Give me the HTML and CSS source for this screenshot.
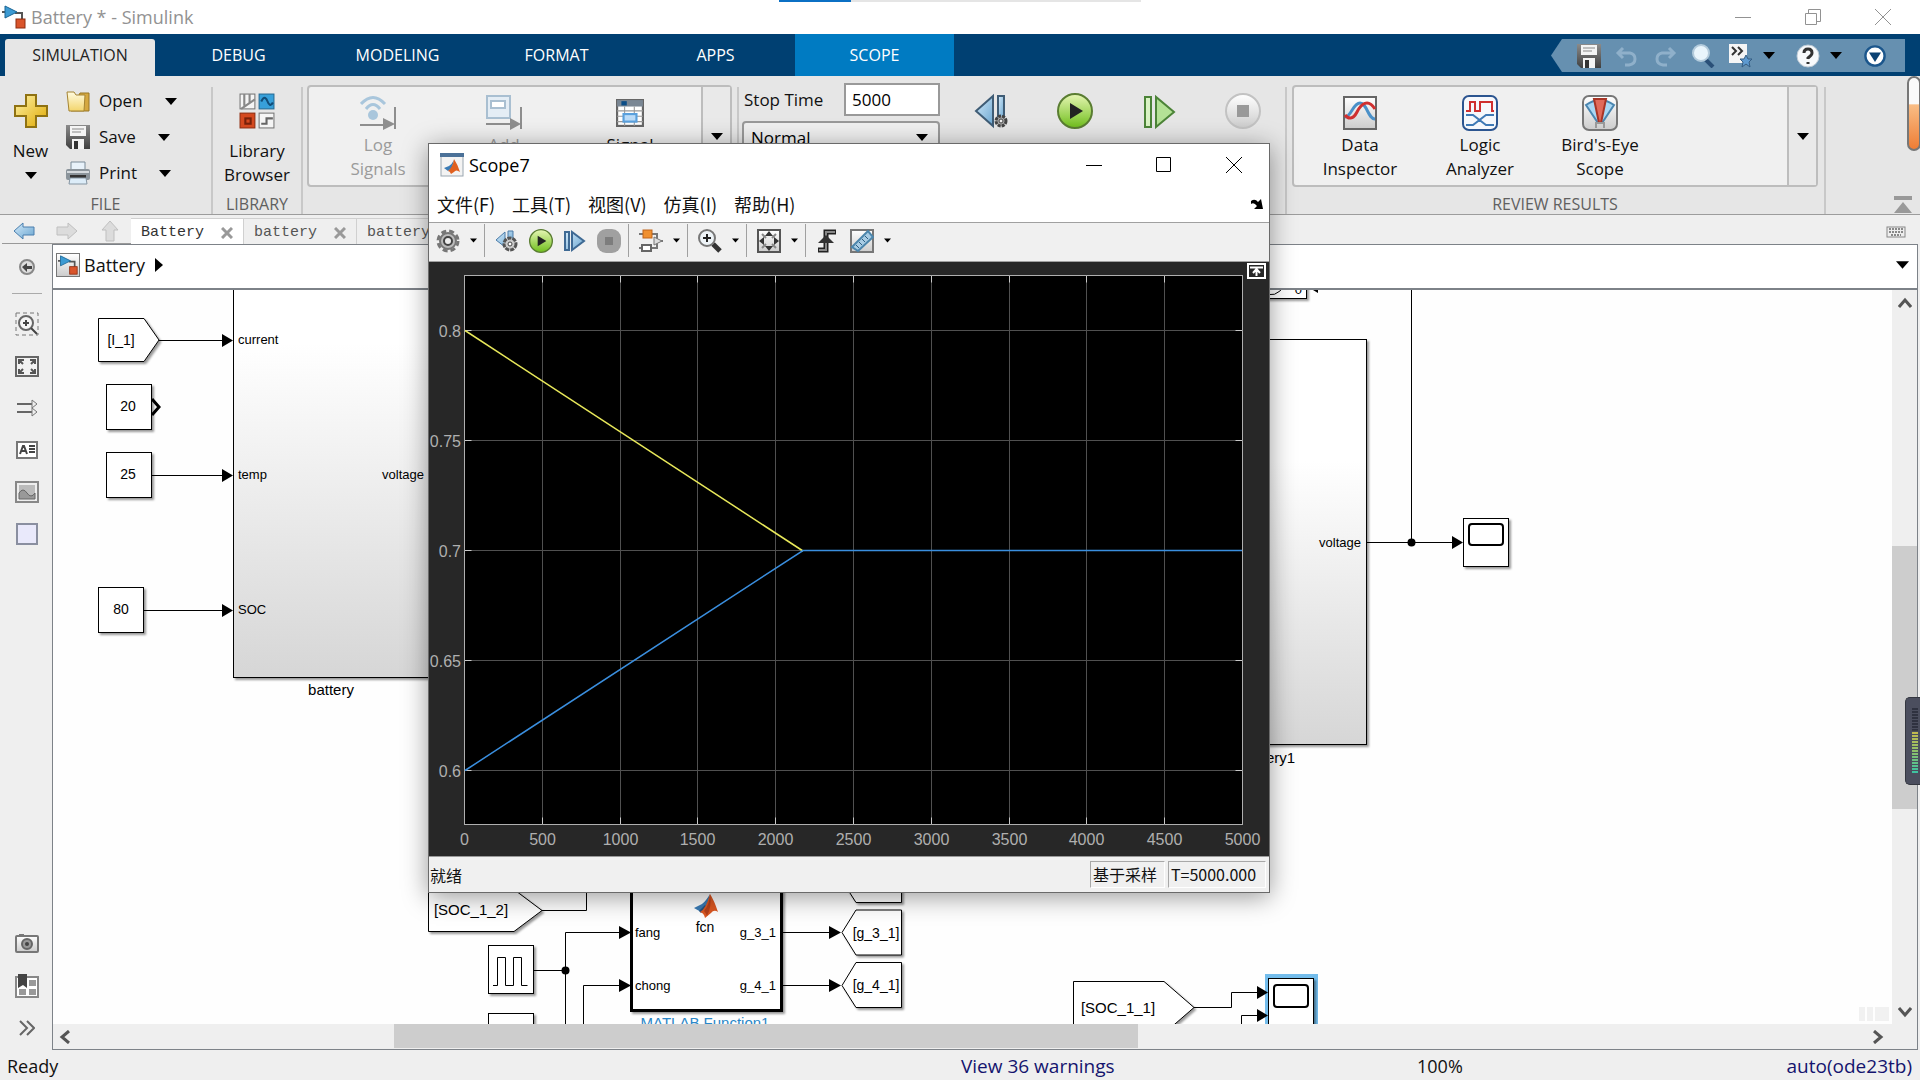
FILE: index.html
```html
<!DOCTYPE html>
<html lang="en">
<head>
  <meta charset="UTF-8">
  <title>Battery * - Simulink</title>
  <link rel="stylesheet" href="styles.css">
</head>
<body>
  <!-- Shared icons -->
  <svg class="sprite" aria-hidden="true">
    <defs>
      <linearGradient id="gold" x1="0" y1="0" x2="1" y2="1"><stop offset="0" stop-color="#fff3a8"/><stop offset="1" stop-color="#dfa800"/></linearGradient>
      <linearGradient id="folder" x1="0" y1="0" x2="0" y2="1"><stop offset="0" stop-color="#fffbe0"/><stop offset="1" stop-color="#f3d56c"/></linearGradient>
      <linearGradient id="blue" x1="0" y1="0" x2="1" y2="1"><stop offset="0" stop-color="#d3eafa"/><stop offset="1" stop-color="#6ba6d0"/></linearGradient>
      <linearGradient id="green" x1="0" y1="0" x2="0" y2="1"><stop offset="0" stop-color="#e6f6b4"/><stop offset="1" stop-color="#6fbe1c"/></linearGradient>
      <linearGradient id="grey" x1="0" y1="0" x2="0" y2="1"><stop offset="0" stop-color="#ffffff"/><stop offset="1" stop-color="#cccccc"/></linearGradient>
      <linearGradient id="steel" x1="0" y1="0" x2="0" y2="1"><stop offset="0" stop-color="#8b8b8b"/><stop offset="1" stop-color="#3f3f3f"/></linearGradient>
      <linearGradient id="body" x1="0" y1="0" x2="0" y2="1"><stop offset="0" stop-color="#fff"/><stop offset=".3" stop-color="#fff"/><stop offset="1" stop-color="#d6d6d6"/></linearGradient>
      <filter id="shadow" x="-20%" y="-20%" width="150%" height="150%"><feDropShadow dx="2" dy="2" stdDeviation="1" flood-color="#000" flood-opacity=".4"/></filter>
    </defs>
    <symbol id="i-caret" viewBox="0 0 12 7"><path d="M0 0h12L6 7z"/></symbol>
    <symbol id="i-simulink" viewBox="0 0 24 24"><path d="M0 7h3M13 8h7v6" fill="none" stroke="#555" stroke-width="2"/><path d="M3 1l12 6L3 13z" fill="#3d9bd3" stroke="#1b6594"/><rect x="14" y="14" width="9" height="9" fill="#d9542b" stroke="#8d2c10"/></symbol>
    <symbol id="i-plus" viewBox="0 0 36 36"><path d="M13 2h10v11h11v10H23v11H13V23H2V13h11z" fill="url(#gold)" stroke="#8f7212" stroke-width="2"/></symbol>
    <symbol id="i-open" viewBox="0 0 24 24"><path d="M14 4h9v18H5z" fill="#d5a840" stroke="#987725"/><path d="M1 3h7l2 3h9l-1 16H3z" fill="url(#folder)" stroke="#a58432"/></symbol>
    <symbol id="i-save" viewBox="0 0 24 24"><path d="M0 0h24v24H4l-4-4z" fill="url(#steel)"/><rect x="4" y="1" width="16" height="10" fill="#f4f4f4"/><path d="M6 4h12M6 7h9" stroke="#888"/><path d="M6 14h12v10H6z" fill="#f4f4f4"/><path d="M8 16h4v8H8z" fill="#333"/></symbol>
    <symbol id="i-print" viewBox="0 0 24 24"><path d="M5 1h14v8H5z" fill="#e8f2fa" stroke="#7b8b98"/><rect x="0" y="8" width="24" height="11" rx="2" fill="#8b949b"/><path d="M1 11h22" stroke="#d5dade" stroke-width="2"/><path d="M4 14h16v3H4z" fill="#333"/><path d="M4 17h16l1 6H3z" fill="#dcecf8" stroke="#8696a3"/></symbol>
    <symbol id="i-library" viewBox="0 0 34 34"><rect x="1" y="1" width="14" height="14" fill="#f5f5f5" stroke="#777"/><path d="M5 1v11M10 1v8M2 15L15 6" stroke="#888" stroke-width="2"/><rect x="19" y="1" width="14" height="14" fill="#37a0da" stroke="#246b95"/><path d="M21 8c3-6 5-3 6 0s3 5 5 1" fill="none" stroke="#124d78" stroke-width="2"/><rect x="1" y="19" width="14" height="14" fill="#d4491f" stroke="#8f2d10"/><rect x="6" y="24" width="5" height="5" fill="none" stroke="#77210a" stroke-width="2"/><rect x="19" y="19" width="14" height="14" fill="#f5f5f5" stroke="#777"/><path d="M21 29h5v-5h6" fill="none" stroke="#666" stroke-width="2"/></symbol>
    <symbol id="i-log" viewBox="0 0 36 36"><path d="M1 9q12-13 24 0M6 14q7-9 14 0" fill="none" stroke="#a9c6dc" stroke-width="3"/><circle cx="13" cy="20" r="5" fill="#a9c6dc"/><path d="M0 30h25M35 12v22" stroke="#8e8e8e" stroke-width="2"/><path d="M23 23l12 6-12 6z" fill="#8e8e8e"/></symbol>
    <symbol id="i-viewer" viewBox="0 0 36 36"><rect x="1" y="1" width="23" height="22" fill="#e4edf5" stroke="#a9bfd1" stroke-width="2"/><rect x="5" y="6" width="14" height="7" fill="#fff" stroke="#a9bfd1" stroke-width="2"/><path d="M0 29h25M35 12v22" stroke="#8e8e8e" stroke-width="2"/><path d="M24 23l11 6-11 6z" fill="#8e8e8e"/></symbol>
    <symbol id="i-table" viewBox="0 0 26 26"><rect x="1" y="1" width="24" height="24" fill="#fff" stroke="#666" stroke-width="2"/><path d="M1 1h24v6H1z" fill="#7a8794"/><path d="M5 2h5v4H5z" fill="#0b4d87"/><path d="M1 11h24M1 16h24M1 21h24M8 7v18M17 7v18" stroke="#999"/><rect x="7" y="14" width="12" height="7" fill="#bcdcf8" stroke="#5aa0dd" stroke-width="2"/></symbol>
    <symbol id="i-stepback" viewBox="0 0 36 36"><path d="M20 3v30L3 18z" fill="url(#blue)" stroke="#3f5c75" stroke-width="2"/><path d="M25 3h6v24h-6z" fill="url(#blue)" stroke="#3f5c75" stroke-width="2"/><circle cx="28" cy="28" r="5" fill="#aaa" stroke="#444" stroke-width="3" stroke-dasharray="3 1"/><circle cx="28" cy="28" r="2" fill="#eee" stroke="#444"/></symbol>
    <symbol id="i-run" viewBox="0 0 36 36"><circle cx="18" cy="18" r="17" fill="url(#green)" stroke="#5a7d32" stroke-width="2"/><path d="M13 10l13 8-13 8z" fill="#222"/></symbol>
    <symbol id="i-stepfwd" viewBox="0 0 36 36"><path d="M4 4h6v30H4z" fill="#d9f3c4" stroke="#4c8438" stroke-width="2"/><path d="M15 4v30l18-15z" fill="#b4e296" stroke="#4c8438" stroke-width="2"/></symbol>
    <symbol id="i-stepfwd-b" viewBox="0 0 24 24"><path d="M2 3h4v18H2zM9 3v18l12-9z" fill="url(#blue)" stroke="#3f6a94" stroke-width="2"/></symbol>
    <symbol id="i-stop" viewBox="0 0 36 36"><circle cx="18" cy="18" r="17" fill="url(#grey)" stroke="#c2c2c2" stroke-width="2"/><path d="M12 12h12v12H12z" fill="#999"/></symbol>
    <symbol id="i-stop-b" viewBox="0 0 24 24"><rect width="24" height="24" rx="9" fill="#a0a0a0"/><path d="M8 8h8v8H8z" fill="#7d7d7d"/></symbol>
    <symbol id="i-data" viewBox="0 0 36 36"><rect x="2" y="2" width="32" height="32" fill="url(#grey)" stroke="#666" stroke-width="2"/><path d="M3 22C9 22 11 8 18 8s8 16 15 16" fill="none" stroke="#4a90c8" stroke-width="3"/><path d="M3 20c3 4 8 5 12-3s11-14 18-3" fill="none" stroke="#cf3030" stroke-width="3"/></symbol>
    <symbol id="i-logic" viewBox="0 0 36 36"><rect x="1" y="1" width="34" height="34" rx="6" fill="#f6f8fc" stroke="#2c5590" stroke-width="2"/><path d="M4 16h4V7h5v9h5V7h12v9h2" fill="none" stroke="#cf3030" stroke-width="2"/><path d="M4 20h7l13 10h8M4 30h7l13-10h8" fill="none" stroke="#3f79b5" stroke-width="2"/></symbol>
    <symbol id="i-bird" viewBox="0 0 36 36"><rect x="1" y="1" width="34" height="34" rx="6" fill="url(#grey)" stroke="#777" stroke-width="2"/><path d="M4 10q14-10 28 0L20 28h-4z" fill="#a9d7f4" stroke="#4a86b0" stroke-width="2"/><path d="M12 4h12l-5 24h-2z" fill="#e16a5a" stroke="#a83425" stroke-width="2"/><path d="M14 33v-5h8v5" fill="none" stroke="#999" stroke-width="2"/></symbol>
    <symbol id="i-undo" viewBox="0 0 24 24"><path d="M3 9h12q5 1 5 6t-6 6h-4M8 4L3 9l5 5" fill="none" stroke="#8fb0ca" stroke-width="3"/></symbol>
    <symbol id="i-search" viewBox="0 0 24 24"><path d="M14 15l8 8" stroke="#2a5078" stroke-width="4"/><circle cx="10" cy="9" r="8" fill="#e9f5fc" stroke="#b3cbdc" stroke-width="2"/></symbol>
    <symbol id="i-fav" viewBox="0 0 24 24"><path d="M0 0h18v19H0z" fill="#f5f5f5"/><path d="M3 3l4 4-4 4M9 3l4 4-4 4" fill="none" stroke="#333" stroke-width="2"/><path d="M17 11l2 4h4l-3 3 1 5-4-3-4 3 1-5-3-3h4z" fill="#5e9ad0" stroke="#355d82"/></symbol>
    <symbol id="i-help" viewBox="0 0 24 24"><circle cx="12" cy="12" r="11" fill="#f7f9fb" stroke="#bdcad5"/><path d="M8 9q0-4 4-4t4 4q0 2-4 5v1M12 18v2" fill="none" stroke="#333" stroke-width="3"/></symbol>
    <symbol id="i-down" viewBox="0 0 20 20"><circle cx="10" cy="10" r="8" fill="#fff" stroke="#1b568c" stroke-width="2"/><path d="M5 7h10l-5 8z" fill="#0b4173"/></symbol>
    <symbol id="i-arrow" viewBox="0 0 22 18"><path d="M1 9l9-8v4h11v8H10v4z" stroke-width="1"/></symbol>
    <symbol id="i-close" viewBox="0 0 12 12"><path d="M1 1l10 10M11 1L1 11" stroke="#999" stroke-width="3"/></symbol>
    <symbol id="i-keys" viewBox="0 0 20 12"><rect x="1" y="1" width="18" height="10" fill="#eee" stroke="#888"/><path d="M3 3h14M3 6h14M5 9h10" stroke="#888" stroke-dasharray="2 1" stroke-width="2"/></symbol>
    <symbol id="i-collapse" viewBox="0 0 18 18"><path d="M0 0h18v4H0zM9 6l9 11H0z" fill="#999"/></symbol>
    <symbol id="i-hide" viewBox="0 0 16 16"><circle cx="8" cy="8" r="7" fill="#ddd" stroke="#888" stroke-width="2"/><path d="M3 8l5-4v3h5v3H8v3z" fill="#444"/></symbol>
    <symbol id="i-zoomsel" viewBox="0 0 24 24"><rect x="1" y="1" width="22" height="22" fill="none" stroke="#777" stroke-dasharray="4 3"/><circle cx="11" cy="11" r="7" fill="#f5f5f5" stroke="#666" stroke-width="2"/><path d="M8 11h6M11 8v6M16 16l6 6" stroke="#444" stroke-width="2"/></symbol>
    <symbol id="i-fit" viewBox="0 0 24 24"><rect x="1" y="3" width="22" height="19" fill="#f2f2f2" stroke="#666" stroke-width="2"/><path d="M4 10V6h5M4 6l4 4M20 10V6h-5M20 6l-4 4M4 15v4h5M4 19l4-4M20 15v4h-5M20 19l-4-4" fill="none" stroke="#555" stroke-width="2"/></symbol>
    <symbol id="i-lines" viewBox="0 0 24 24"><path d="M2 8h17M2 16h17" stroke="#666" stroke-width="2"/><path d="M17 4l5 4-5 4zM17 12l5 4-5 4z" fill="#eee" stroke="#777"/></symbol>
    <symbol id="i-note" viewBox="0 0 24 24"><rect x="2" y="4" width="20" height="16" fill="#fff" stroke="#777" stroke-width="2"/><path d="M5 16l3-8h1l3 8M6 13h5M14 8h6M14 11h6M14 14h6" fill="none" stroke="#444" stroke-width="2"/></symbol>
    <symbol id="i-image" viewBox="0 0 24 24"><rect x="1" y="2" width="22" height="20" fill="#eee" stroke="#888" stroke-width="2"/><path d="M4 5h16v14H4z" fill="#bbb"/><path d="M4 13q4-6 8 0t8 0v6H4z" fill="#999" stroke="#666"/></symbol>
    <symbol id="i-area" viewBox="0 0 24 24"><rect x="2" y="2" width="20" height="20" fill="#e9e9fb" stroke="#8a8fa0" stroke-width="2"/></symbol>
    <symbol id="i-camera" viewBox="0 0 24 24"><path d="M4 2h5v3H4z" fill="#777"/><rect x="1" y="4" width="22" height="16" rx="1" fill="url(#grey)" stroke="#777" stroke-width="2"/><circle cx="12" cy="12" r="5" fill="#999" stroke="#666" stroke-width="2"/><circle cx="12" cy="12" r="2" fill="#444"/></symbol>
    <symbol id="i-book" viewBox="0 0 24 24"><rect x="1" y="3" width="22" height="20" fill="#fff" stroke="#888" stroke-width="2"/><path d="M14 6h7v6h-7zM4 15h7v6H4zM14 15h7v6h-7z" fill="#999"/><path d="M3 0h9v14l-4-3-5 3z" fill="#444"/></symbol>
    <symbol id="i-more" viewBox="0 0 16 16"><path d="M1 1l7 7-7 7M8 1l7 7-7 7" fill="none" stroke="#666" stroke-width="2"/></symbol>
    <symbol id="i-chev" viewBox="0 0 14 14"><path d="M1 10l6-7 6 7" fill="none" stroke="#555" stroke-width="3"/></symbol>
    <symbol id="i-membrane" viewBox="0 0 24 24"><path d="M0 14l8-4q4-3 8-10l-3 13-6 5z" fill="#3a7bb5"/><path d="M5 17l6-6 2 2-6 6z" fill="#25507c"/><path d="M16 0q4 6 8 18-4-3-7 1l-6 5q-1-5-5-6 6-3 10-18z" fill="#dd5822"/><path d="M16 0q0 10-6 17 2 2 3 5 5-9 3-22z" fill="#b5401a"/></symbol>
    <symbol id="i-scopeapp" viewBox="0 0 24 24"><rect x="1" y="1" width="22" height="22" fill="#f3f3f3" stroke="#9aa6b0"/><path d="M0 0h24v4H0z" fill="#4b7198"/><path d="M4 15l5-2q3-2 5-6l-2 8-4 3z" fill="#3a7bb5"/><path d="M14 6q4 6 6 13-4-3-6 0l-3 2q-1-3-3-3 5-4 6-12z" fill="#e0601f"/></symbol>
    <symbol id="i-gear" viewBox="0 0 24 24"><circle cx="12" cy="12" r="10" fill="none" stroke="#777" stroke-width="3" stroke-dasharray="5 3"/><circle cx="12" cy="12" r="8" fill="#bbb" stroke="#777" stroke-width="2"/><circle cx="12" cy="12" r="4" fill="#eee" stroke="#444" stroke-width="2"/></symbol>
    <symbol id="i-sback" viewBox="0 0 24 24"><path d="M10 3v15L1 11zM13 2h5v12h-5z" fill="url(#blue)" stroke="#4b7ba8" stroke-width="1"/><circle cx="15" cy="15" r="6" fill="#ccc" stroke="#555" stroke-width="3" stroke-dasharray="4 1"/><circle cx="15" cy="15" r="2" fill="#fff" stroke="#444"/></symbol>
    <symbol id="i-blocks" viewBox="0 0 24 24"><path d="M0 5h4M12 5h6v14H0M18 12h6" fill="none" stroke="#777" stroke-width="2"/><rect x="4" y="1" width="9" height="8" fill="#f09030" stroke="#c0651a"/><path d="M15 8l8 4-8 4z" fill="#ddd" stroke="#777"/><rect x="3" y="16" width="9" height="6" fill="#fff" stroke="#666" stroke-width="2"/></symbol>
    <symbol id="i-zoom" viewBox="0 0 24 24"><path d="M15 15l7 7" stroke="#333" stroke-width="5"/><circle cx="9" cy="9" r="8" fill="#eef4f8" stroke="#777" stroke-width="2"/><path d="M5 9h8M9 5v8" stroke="#222" stroke-width="2"/></symbol>
    <symbol id="i-scale" viewBox="0 0 24 24"><rect x="1" y="1" width="22" height="22" fill="url(#grey)" stroke="#555" stroke-width="2"/><path d="M5 5l4 4M19 5l-4 4M5 19l4-4M19 19l-4-4" stroke="#888" stroke-width="2"/><path d="M12 2l4 5H8zM12 22l4-5H8zM2 12l5-4v8zM22 12l-5-4v8z" fill="#333"/></symbol>
    <symbol id="i-trigger" viewBox="0 0 24 24"><path d="M2 21h8V3h10" fill="none" stroke="#222" stroke-width="5"/><path d="M3 21h7V3h9" fill="none" stroke="#888" stroke-width="2"/><path d="M10 6l8 8H2z" fill="#333"/></symbol>
    <symbol id="i-ruler" viewBox="0 0 24 24"><rect x="1" y="1" width="22" height="22" fill="url(#grey)" stroke="#777" stroke-width="2"/><path d="M2 18L18 2l5 6L8 22z" fill="#a8cce4" stroke="#4c86ac" stroke-width="2"/><path d="M9 19l-3-3M12 16l-3-3M15 13l-3-3M18 10l-3-3" stroke="#2d5d80"/></symbol>
  </svg>

  <header class="titlebar">
    <svg class="ic24"><use href="#i-simulink"/></svg>
    <h1>Battery * - Simulink</h1>
    <div class="window-buttons">
      <button aria-label="Minimize"><svg width="16" height="16"><path d="M0 8.500h16"/></svg></button>
      <button aria-label="Restore"><svg width="16" height="16"><path d="M.5 4.500h11v11H.5zM3.500 4.500v-4h12v12h-4"/></svg></button>
      <button aria-label="Close"><svg width="16" height="16"><path d="M0 0l16 16M16 0L0 16"/></svg></button>
    </div>
    <div class="progress"><span></span></div>
  </header>

  <nav class="tabs">
    <button class="active">SIMULATION</button>
    <button>DEBUG</button>
    <button>MODELING</button>
    <button>FORMAT</button>
    <button>APPS</button>
    <button class="context">SCOPE</button>
    <div class="quick">
      <button aria-label="Save"><svg class="ic24"><use href="#i-save"/></svg></button>
      <button aria-label="Undo"><svg class="ic24"><use href="#i-undo"/></svg></button>
      <button aria-label="Redo"><svg class="ic24 flip"><use href="#i-undo"/></svg></button>
      <button aria-label="Search"><svg class="ic24"><use href="#i-search"/></svg></button>
      <button class="split" aria-label="Favorites"><svg class="ic24"><use href="#i-fav"/></svg><svg class="caret"><use href="#i-caret"/></svg></button>
      <button class="split" aria-label="Help"><svg class="ic24"><use href="#i-help"/></svg><svg class="caret"><use href="#i-caret"/></svg></button>
      <button aria-label="Options"><svg class="ic24"><use href="#i-down"/></svg></button>
    </div>
  </nav>

  <section class="ribbon">
    <div class="section file">
      <div class="section-body">
        <button class="big new"><svg class="ic36"><use href="#i-plus"/></svg><span>New</span><svg class="caret"><use href="#i-caret"/></svg></button>
        <div class="rows">
          <button><svg class="ic24"><use href="#i-open"/></svg><span>Open</span><svg class="caret"><use href="#i-caret"/></svg></button>
          <button><svg class="ic24"><use href="#i-save"/></svg><span>Save</span><svg class="caret"><use href="#i-caret"/></svg></button>
          <button><svg class="ic24"><use href="#i-print"/></svg><span>Print</span><svg class="caret"><use href="#i-caret"/></svg></button>
        </div>
      </div>
      <h2>FILE</h2>
    </div>
    <div class="section library">
      <div class="section-body">
        <button class="big"><svg class="ic36"><use href="#i-library"/></svg><span>Library<br>Browser</span></button>
      </div>
      <h2>LIBRARY</h2>
    </div>
    <div class="section prepare">
      <div class="gallery">
        <button class="big" disabled><svg class="ic36"><use href="#i-log"/></svg><span>Log<br>Signals</span></button>
        <button class="big" disabled><svg class="ic36"><use href="#i-viewer"/></svg><span>Add</span></button>
        <button class="big"><svg class="ic36 table-icon"><use href="#i-table"/></svg><span>Signal</span></button>
        <button class="more" aria-label="More"><svg class="caret"><use href="#i-caret"/></svg></button>
      </div>
    </div>
    <div class="section simulate">
      <div class="section-body">
        <div class="settings">
          <label for="stop">Stop Time</label>
          <input id="stop" type="text" value="5000">
          <div class="mode">
            <select aria-label="Simulation mode"><option>Normal</option></select>
            <svg class="caret"><use href="#i-caret"/></svg>
          </div>
        </div>
        <button class="big" aria-label="Step Back"><svg class="ic36"><use href="#i-stepback"/></svg></button>
        <button class="big" aria-label="Run"><svg class="ic36"><use href="#i-run"/></svg></button>
        <button class="big" aria-label="Step Forward"><svg class="ic36"><use href="#i-stepfwd"/></svg></button>
        <button class="big" aria-label="Stop"><svg class="ic36"><use href="#i-stop"/></svg></button>
      </div>
    </div>
    <div class="section review">
      <div class="gallery">
        <button class="big"><svg class="ic36"><use href="#i-data"/></svg><span>Data<br>Inspector</span></button>
        <button class="big"><svg class="ic36"><use href="#i-logic"/></svg><span>Logic<br>Analyzer</span></button>
        <button class="big"><svg class="ic36"><use href="#i-bird"/></svg><span>Bird's-Eye<br>Scope</span></button>
        <button class="more" aria-label="More"><svg class="caret"><use href="#i-caret"/></svg></button>
      </div>
      <h2>REVIEW RESULTS</h2>
    </div>
    <button class="collapse" aria-label="Collapse"><svg width="18" height="18"><use href="#i-collapse"/></svg></button>
    <div class="pill"></div>
  </section>

  <div class="doc-tabs">
    <div class="history">
      <button aria-label="Back"><svg class="back" width="22" height="18"><use href="#i-arrow"/></svg></button>
      <button aria-label="Forward"><svg class="fwd flip" width="22" height="18"><use href="#i-arrow"/></svg></button>
      <button aria-label="Up"><svg class="fwd up" width="22" height="18"><use href="#i-arrow"/></svg></button>
    </div>
    <div class="doc active"><span>Battery</span><button aria-label="Close tab"><svg width="12" height="12"><use href="#i-close"/></svg></button></div>
    <div class="doc"><span>battery</span><button aria-label="Close tab"><svg width="12" height="12"><use href="#i-close"/></svg></button></div>
    <div class="doc"><span>battery</span><button aria-label="Close tab"><svg width="12" height="12"><use href="#i-close"/></svg></button></div>
    <button class="keys" aria-label="Keyboard"><svg width="20" height="12"><use href="#i-keys"/></svg></button>
  </div>

  <main class="workspace">
    <aside class="palette">
      <button aria-label="Hide browser"><svg width="16" height="16"><use href="#i-hide"/></svg></button>
      <hr>
      <button aria-label="Zoom"><svg class="ic24"><use href="#i-zoomsel"/></svg></button>
      <button aria-label="Fit to view"><svg class="ic24"><use href="#i-fit"/></svg></button>
      <button aria-label="Sample time"><svg class="ic24"><use href="#i-lines"/></svg></button>
      <button aria-label="Annotation"><svg class="ic24"><use href="#i-note"/></svg></button>
      <button aria-label="Image"><svg class="ic24"><use href="#i-image"/></svg></button>
      <button aria-label="Area"><svg class="ic24"><use href="#i-area"/></svg></button>
      <div class="spacer"></div>
      <button aria-label="Screenshot"><svg class="ic24"><use href="#i-camera"/></svg></button>
      <button aria-label="Viewmarks"><svg class="ic24"><use href="#i-book"/></svg></button>
      <button aria-label="More"><svg width="16" height="16"><use href="#i-more"/></svg></button>
    </aside>

    <div class="editor">
      <div class="crumbs">
        <span class="crumb-icon"><svg width="20" height="20"><use href="#i-simulink"/></svg></span>
        <a href="#">Battery</a>
        <svg width="8" height="14"><path d="M0 0l8 7-8 7z"/></svg>
        <button aria-label="Path history"><svg width="13" height="8"><use href="#i-caret"/></svg></button>
      </div>

      <div class="canvas-area">
        <svg class="diagram">
          <!-- drawn in window coordinates, moved so the canvas corner is 53,290 -->
          <g transform="translate(-53 -290)">
            <g class="block">
              <rect x="233.500" y="200.500" width="260" height="477" fill="url(#body)"/>
              <path d="M98.500 318.500H144L159 340l-15 21.500H98.500z"/>
              <rect x="106.500" y="384.500" width="45" height="45"/>
              <rect x="106.500" y="452.500" width="45" height="45"/>
              <rect x="98.500" y="587.500" width="45" height="45"/>
              <path d="M428.500 889.500H514L542 910.500l-28 21H428.500z"/>
              <rect x="488.500" y="945.500" width="45" height="48"/>
              <rect x="488.500" y="1013.500" width="45" height="48"/>
              <rect class="thick" x="631.500" y="850.500" width="150" height="160"/>
              <path d="M842 880.500l14-22.500h45.500v44.500H856z"/>
              <path d="M842 932.500l14-22.500h45.500v45H856z"/>
              <path d="M842 985.500l14-23h45.500v45H856z"/>
              <rect x="1240.500" y="260.500" width="66" height="38"/>
              <rect x="1100.500" y="339.500" width="266" height="405" fill="url(#body)"/>
              <rect x="1463.500" y="518.500" width="45" height="48"/>
              <path d="M1073.500 981.500H1164l30 26-30 26H1073.500z"/>
            </g>
            <rect x="1265" y="974" width="53" height="90" fill="#74bdec"/>
            <rect class="block" x="1268.500" y="978.500" width="45" height="80"/>
            <g class="wire">
              <path d="M159 340.500h70M152 475.500h75M144 610.500h83"/>
              <path d="M542 910.500h44.500V880M534 970.500h31.500M565.500 1030V932.500H622M583.500 1030V985.500H622"/>
              <path d="M782 932.500h50M782 985.500h50"/>
              <path d="M1367 542.500h90M1411.500 542V280M1194 1007.500h37.500v-15H1260M1241.500 1030v-14.500H1260"/>
              <path d="M493 985.500h4.500v-28h8v28h8v-28h8v28h6"/>
              <path d="M1263 292q12 8 22-7"/>
              <rect class="screen" x="1469" y="524" width="34" height="21" rx="3"/>
              <rect class="screen" x="1274" y="985" width="34" height="22" rx="3"/>
              <path class="port" d="M152 399l7 8-7 8"/>
            </g>
            <g class="heads">
              <path d="M222 334l11 6.500-11 6.500zM222 469l11 6.500-11 6.500zM222 604l11 6.500-11 6.500z"/>
              <path d="M619 926l12 6.500-12 6.500zM619 979l12 6.500-12 6.500zM829 926l12 6.500-12 6.500zM829 979l12 6.500-12 6.500z"/>
              <path d="M1452 536l11 6.500-11 6.500zM1257 986l11 6.500-11 6.500zM1257 1009l11 6.500-11 6.500zM1308 287l10 6v-10z"/>
              <circle cx="565.500" cy="970.500" r="4"/>
              <circle cx="1411.500" cy="542.500" r="4"/>
            </g>
            <use href="#i-membrane" x="694" y="894" width="24" height="24"/>
            <g class="port-text">
              <text x="238" y="344">current</text>
              <text x="238" y="479">temp</text>
              <text x="238" y="614">SOC</text>
              <text x="424" y="479" class="end">voltage</text>
              <text x="635" y="937">fang</text>
              <text x="635" y="990">chong</text>
              <text x="776" y="937" class="end">g_3_1</text>
              <text x="776" y="990" class="end">g_4_1</text>
              <text x="1361" y="547" class="end">voltage</text>
              <text x="1302" y="294" class="end">0</text>
            </g>
            <g class="block-text">
              <text x="121" y="345">[I_1]</text>
              <text x="128" y="411">20</text>
              <text x="128" y="479">25</text>
              <text x="121" y="614">80</text>
              <text x="705" y="932">fcn</text>
              <text x="876" y="938">[g_3_1]</text>
              <text x="876" y="990">[g_4_1]</text>
            </g>
            <g class="name-text">
              <text x="471" y="915">[SOC_1_2]</text>
              <text x="1118" y="1013">[SOC_1_1]</text>
              <text x="331" y="695">battery</text>
              <text x="1268" y="763">battery1</text>
              <text x="705" y="1028" class="link">MATLAB Function1</text>
            </g>
          </g>
        </svg>
        <div class="vscroll">
          <svg width="14" height="14"><use href="#i-chev"/></svg>
          <div class="track"><span class="thumb"></span></div>
          <svg class="down" width="14" height="14"><use href="#i-chev"/></svg>
        </div>
        <div class="hscroll">
          <svg class="left" width="14" height="14"><use href="#i-chev"/></svg>
          <div class="track"><span class="thumb"></span></div>
          <svg class="right" width="14" height="14"><use href="#i-chev"/></svg>
        </div>
        <div class="strips"><i></i><i></i><i></i></div>
      </div>
    </div>
    <div class="meter"><span></span></div>
  </main>

  <footer class="status">
    <span>Ready</span>
    <a href="#">View 36 warnings</a>
    <span class="zoom">100%</span>
    <a href="#" class="solver">auto(ode23tb)</a>
  </footer>

  <section class="scope">
    <header class="scope-title">
      <svg class="ic24"><use href="#i-scopeapp"/></svg>
      <h2>Scope7</h2>
      <div class="window-buttons">
        <button aria-label="Minimize"><svg width="16" height="16"><path d="M0 8.500h16"/></svg></button>
        <button aria-label="Maximize"><svg width="16" height="16"><path d="M.5.5h14v14H.5z"/></svg></button>
        <button aria-label="Close"><svg width="16" height="16"><path d="M0 0l16 16M16 0L0 16"/></svg></button>
      </div>
    </header>
    <nav class="menu" lang="zh">
      <button>文件(F)</button>
      <button>工具(T)</button>
      <button>视图(V)</button>
      <button>仿真(I)</button>
      <button>帮助(H)</button>
      <button class="dock" aria-label="Dock"><svg width="12" height="10"><path d="M0 2q4-3 7 1l3-3v0l2 10H3l3-3Q3 3 0 5z"/></svg></button>
    </nav>
    <div class="tools">
      <button aria-label="Settings"><svg class="ic24"><use href="#i-gear"/></svg></button>
      <button class="drop" aria-label="Settings menu"><svg><use href="#i-caret"/></svg></button>
      <i></i>
      <button aria-label="Step back"><svg class="ic24"><use href="#i-sback"/></svg></button>
      <button aria-label="Run"><svg class="ic24"><use href="#i-run"/></svg></button>
      <button aria-label="Step forward"><svg class="ic24"><use href="#i-stepfwd-b"/></svg></button>
      <button aria-label="Stop"><svg class="ic24"><use href="#i-stop-b"/></svg></button>
      <i></i>
      <button aria-label="Highlight block"><svg class="ic24"><use href="#i-blocks"/></svg></button>
      <button class="drop" aria-label="Block menu"><svg><use href="#i-caret"/></svg></button>
      <i></i>
      <button aria-label="Zoom"><svg class="ic24"><use href="#i-zoom"/></svg></button>
      <button class="drop" aria-label="Zoom menu"><svg><use href="#i-caret"/></svg></button>
      <i></i>
      <button aria-label="Scale axes"><svg class="ic24"><use href="#i-scale"/></svg></button>
      <button class="drop" aria-label="Scale menu"><svg><use href="#i-caret"/></svg></button>
      <i></i>
      <button aria-label="Trigger"><svg class="ic24"><use href="#i-trigger"/></svg></button>
      <button aria-label="Measurements"><svg class="ic24"><use href="#i-ruler"/></svg></button>
      <button class="drop" aria-label="Measurement menu"><svg><use href="#i-caret"/></svg></button>
    </div>
    <svg class="plot" id="plot" viewBox="0 0 840 594">
      <rect class="axes" x="35.500" y="13.500" width="778" height="549"/>
      <g id="grid"></g>
      <polyline class="yellow" points="36,68.500 374,289"/>
      <polyline class="blue" points="36,508.500 374,288.500 813,288.500"/>
      <g class="pin"><rect x="819" y="2" width="17" height="14"/><path d="M821 5.500h13M827.500 14V8M824 11l3.500-4 3.500 4"/></g>
    </svg>
    <footer class="scope-status" lang="zh">
      <span class="ready">就绪</span>
      <span class="cell mode-cell">基于采样</span>
      <span class="cell time-cell">T=5000.000</span>
    </footer>
  </section>

  <script src="plot.js"></script>
</body>
</html>
```

FILE: styles.css
```css
* {
  box-sizing: border-box;
}

body {
  margin: 0;
  height: 100vh;
  display: flex;
  flex-direction: column;
  overflow: hidden;
  background: #efefef;
  color: #111;
  font-family: "Open Sans", "Noto Sans", sans-serif;
  font-size: 17px;
  line-height: 24px;
}

h1, h2 {
  margin: 0;
  font-weight: 400;
}

button {
  margin: 0;
  padding: 0;
  border: 0;
  background: none;
  color: inherit;
  font: inherit;
  display: flex;
  align-items: center;
  justify-content: center;
}

a {
  color: inherit;
  text-decoration: none;
}

svg {
  display: block;
  flex: none;
}

.sprite {
  position: absolute;
  width: 0;
  height: 0;
}

.ic24 {
  width: 24px;
  height: 24px;
}

.ic36 {
  width: 36px;
  height: 36px;
}

.caret {
  width: 12px;
  height: 7px;
}

.flip {
  transform: scaleX(-1);
}

/* Title bar */
.titlebar {
  position: relative;
  height: 34px;
  padding: 0 2px;
  display: flex;
  align-items: center;
  gap: 5px;
  background: #fff;
  color: #929292;
}

.titlebar h1 {
  flex: 1;
  font-size: 18px;
}

.window-buttons {
  display: flex;
  height: 100%;
}

.window-buttons button {
  width: 70px;
}

.window-buttons path {
  fill: none;
  stroke: currentColor;
}

.progress {
  position: absolute;
  left: 779px;
  top: 0;
  width: 362px;
  height: 2px;
  background: #e5e5e5;
}

.progress span {
  display: block;
  width: 20%;
  height: 2px;
  background: #0b70c4;
}

/* Ribbon tabs */
.tabs {
  height: 42px;
  display: flex;
  background: #004072;
  color: #fff;
  font-size: 16px;
}

.tabs > button {
  width: 159px;
  padding-bottom: 1px;
}

.tabs > .active {
  width: 150px;
  margin: 5px 4px 0 5px;
  padding-bottom: 6px;
  border-radius: 3px 3px 0 0;
  background: #e6e6e6;
  color: #222;
}

.tabs > .context {
  background: #007bc2;
}

.quick {
  height: 33px;
  margin: 5px 15px 0 auto;
  padding: 0 18px 0 26px;
  display: flex;
  align-items: center;
  gap: 14px;
  background: #6690b0;
  clip-path: polygon(11px 0, 100% 0, 100% 100%, 11px 100%, 0 50%);
}

.quick .split {
  gap: 10px;
  margin-right: 7px;
}

/* Ribbon */
.ribbon {
  position: relative;
  height: 139px;
  display: flex;
  background: #e6e6e6;
  border-bottom: 1px solid #9c9c9c;
}

.section {
  display: flex;
  flex-direction: column;
  padding-top: 9px;
  border-right: 2px solid #c8c8c8;
  border-image: linear-gradient(transparent 12px, #c8c8c8 12px) 1;
}

.section h2 {
  margin-top: auto;
  font-size: 16px;
  line-height: 20px;
  text-align: center;
  color: #606060;
}

.section-body {
  display: flex;
}

.big {
  flex-direction: column;
  justify-content: flex-start;
  padding-top: 8px;
}

.big span {
  margin-top: 10px;
}

.big:disabled {
  color: #9b9b9b;
}

.file {
  width: 213px;
}

.new {
  width: 61px;
}

.new .caret {
  margin-top: 9px;
}

.rows {
  display: flex;
  flex-direction: column;
  gap: 12px;
  padding: 4px 0 0 5px;
}

.rows button {
  justify-content: flex-start;
  gap: 9px;
}

.rows .caret {
  margin-left: 13px;
}

.library {
  width: 90px;
}

.library .big {
  width: 100%;
}

.prepare {
  width: 436px;
  padding-left: 4px;
  padding-right: 5px;
}

.gallery {
  height: 102px;
  display: flex;
  padding-left: 6px;
  border: 2px solid #bdbdbd;
  border-radius: 4px;
  background: #f0f0f0;
}

.gallery .big {
  width: 126px;
}

.gallery .big span {
  margin-top: 2px;
}

.table-icon {
  padding: 4px;
}

.gallery .more {
  width: 29px;
  margin-left: auto;
  border-left: 2px solid #bdbdbd;
  background: #e9e9e9;
}

.simulate {
  width: 548px;
}

.simulate .section-body {
  padding-left: 3px;
}

.simulate .big {
  width: 84px;
}

.settings {
  width: 198px;
  margin: -2px 9px 0 0;
  display: grid;
  grid-template-columns: 1fr 96px;
  gap: 5px 0;
  align-items: center;
}

.settings label {
  padding-left: 2px;
}

.settings input {
  height: 33px;
  padding: 0 6px;
  border: 2px solid #999;
  background: #fff;
  font: inherit;
}

.mode {
  position: relative;
  grid-column: 1 / 3;
}

.mode select {
  width: 100%;
  height: 34px;
  padding: 0 7px;
  border: 2px solid #999;
  border-radius: 4px;
  background: #f0f0f0;
  font: inherit;
  appearance: none;
}

.mode .caret {
  position: absolute;
  right: 12px;
  top: 13px;
}

.review {
  width: 539px;
  padding-left: 5px;
  padding-right: 6px;
}

.review .big {
  width: 120px;
}

.collapse {
  margin: auto 8px 0 auto;
}

.pill {
  position: absolute;
  right: -1px;
  top: 0;
  width: 14px;
  height: 75px;
  border: 2px solid #777;
  border-radius: 7px;
  background: linear-gradient(#fafafa 36%, #f9bd85 38%, #ee7d35);
}

/* Model tabs */
.doc-tabs {
  height: 29px;
  display: flex;
  align-items: flex-end;
  font-family: "Liberation Mono", monospace;
  font-size: 15px;
  color: #555;
}

.history {
  width: 129px;
  height: 29px;
  margin-left: 2px;
  display: flex;
  border-bottom: 1px solid #999;
}

.history button {
  width: 43px;
  padding-top: 4px;
}

.back {
  fill: url(#blue);
  stroke: #4a7fae;
}

.fwd {
  fill: #dcdcdc;
  stroke: #bfbfbf;
}

.up {
  transform: rotate(90deg);
}

.doc {
  width: 113px;
  height: 26px;
  padding: 2px 10px 0;
  display: flex;
  align-items: center;
  justify-content: space-between;
  border: 1px solid #d0d0d0;
  border-width: 1px 1px 0 0;
}

.doc.active {
  background: #fff;
  color: #333;
}

.keys {
  height: 22px;
  margin: 0 14px 1px auto;
}

/* Work area */
.workspace {
  position: relative;
  flex: 1;
  min-height: 0;
  display: flex;
}

.palette {
  width: 52px;
  padding: 7px 0 1px 2px;
  display: flex;
  flex-direction: column;
  align-items: center;
}

.palette button {
  width: 42px;
  height: 42px;
  flex: none;
}

.palette button:first-child {
  height: 32px;
}

.palette hr {
  width: 30px;
  margin: 10px 0 9px;
  border: 0;
  border-top: 1px solid #aaa;
}

.spacer {
  flex: 1;
}

.editor {
  flex: 1;
  min-width: 0;
  margin-right: 2px;
  display: flex;
  flex-direction: column;
  border: 1px solid #7d8288;
}

.crumbs {
  height: 45px;
  padding: 0 8px 3px 3px;
  display: flex;
  align-items: center;
  background: #fff;
  border-bottom: 2px solid #7d8288;
  font-size: 18px;
}

.crumbs a {
  margin: 0 10px 0 4px;
}

.crumbs button {
  margin-left: auto;
}

.crumb-icon {
  padding: 1px;
  border: 1px solid #777;
  background: linear-gradient(#fff, #ccc);
}

.canvas-area {
  position: relative;
  flex: 1;
  min-height: 0;
  display: grid;
  grid-template: 1fr 25px / 1fr 25px;
}

.diagram {
  width: 100%;
  height: 100%;
  overflow: hidden;
  background: #fefefe;
  font-family: "Liberation Sans", Arial, sans-serif;
}

.block {
  fill: #fff;
  stroke: #000;
  filter: url(#shadow);
}

.block .thick {
  stroke-width: 3;
}

.wire {
  fill: none;
  stroke: #000;
}

.wire .screen {
  stroke-width: 2;
}

.wire .port {
  stroke-width: 3;
}

.port-text {
  font-size: 13px;
}

.end {
  text-anchor: end;
}

.block-text {
  font-size: 14px;
  text-anchor: middle;
}

.name-text {
  font-size: 15px;
  text-anchor: middle;
}

.link {
  fill: #2b87c8;
}

.vscroll {
  grid-row: 1 / 3;
  grid-column: 2;
  display: flex;
  flex-direction: column;
  align-items: center;
  padding: 7px 0 31px;
  background: #efefef;
}

.vscroll .track {
  flex: 1;
  width: 100%;
  display: flex;
  flex-direction: column;
  padding-top: 235px;
}

.vscroll .thumb {
  height: 263px;
  background: #cdcdcd;
}

.hscroll {
  grid-row: 2;
  grid-column: 1;
  display: flex;
  align-items: center;
  padding: 0 8px 0 6px;
}

.hscroll .track {
  flex: 1;
  height: 100%;
  padding-left: 321px;
}

.hscroll .thumb {
  display: block;
  width: 744px;
  height: 24px;
  background: #cdcdcd;
}

.down {
  transform: rotate(180deg);
}

.left {
  transform: rotate(-90deg);
}

.right {
  transform: rotate(90deg);
}

.strips {
  position: absolute;
  right: 28px;
  bottom: 28px;
  display: flex;
  gap: 2px;
}

.strips i {
  width: 6px;
  height: 14px;
  background: #f1f1f1;
}

.strips i:last-child {
  width: 14px;
}

.meter {
  position: absolute;
  right: 0;
  top: 453px;
  width: 15px;
  height: 88px;
  padding: 10px 2px 10px 6px;
  border-radius: 5px 0 0 5px;
  border: 1px solid #33363f;
  border-right: 0;
  background: #4b4e5e;
}

.meter span {
  display: block;
  height: 100%;
  background:
    repeating-linear-gradient(transparent 0 2px, #4b4e5e 2px 3px),
    linear-gradient(#2f3240 34%, #c6b94c 35%, #8fc069 65%, #37c3a5);
}

/* Status bar */
.status {
  height: 30px;
  padding: 1px 8px 0 7px;
  display: grid;
  grid-template-columns: 954px 456px 1fr auto;
  align-items: center;
  font-size: 18px;
}

.status a {
  color: #14146e;
  font-size: 19px;
}

/* Scope window */
.scope {
  position: absolute;
  left: 428px;
  top: 143px;
  width: 842px;
  display: flex;
  flex-direction: column;
  border: 1px solid #6a6a6a;
  background: #f0f0f0;
  box-shadow: 0 4px 24px rgba(0, 0, 0, .4);
  font-family: "Open Sans", "Noto Sans CJK SC", sans-serif;
}

.scope-title {
  height: 44px;
  padding: 0 0 2px 11px;
  display: flex;
  align-items: center;
  gap: 5px;
  background: #fff;
  color: #000;
}

.scope-title h2 {
  flex: 1;
  font-size: 18px;
}

.menu {
  height: 35px;
  padding: 0 6px 2px 8px;
  display: flex;
  gap: 17px;
  background: #fff;
  border-bottom: 1px solid #a0a0a0;
  font-family: "Noto Sans CJK SC", sans-serif;
  font-size: 18px;
}

.dock {
  margin-left: auto;
}

.tools {
  height: 39px;
  padding: 0 0 3px 2px;
  display: flex;
  align-items: center;
  border-bottom: 1px solid #a0a0a0;
}

.tools button {
  width: 34px;
  height: 100%;
}

.tools .drop {
  width: 17px;
}

.drop svg {
  width: 7px;
  height: 5px;
}

.tools i {
  width: 1px;
  height: 33px;
  margin: 0 5px 0 2px;
  background: #a0a0a0;
}

.plot {
  width: 100%;
  background: #272727;
  font-family: "Liberation Sans", Arial, sans-serif;
  font-size: 16px;
}

.axes {
  fill: #000;
  stroke: #afafaf;
}

.grid-line {
  stroke: #505050;
}

.tick {
  stroke: #c8c8c8;
}

.plot text {
  fill: #afafaf;
}

.x-label {
  text-anchor: middle;
}

.y-label {
  text-anchor: end;
}

.yellow, .blue {
  fill: none;
  stroke: #e8e85a;
  stroke-width: 1.5px;
}

.blue {
  stroke: #3a8ede;
}

.pin {
  fill: none;
  stroke: #fff;
  stroke-width: 2;
}

.scope-status {
  height: 36px;
  padding: 0 3px 0 1px;
  display: flex;
  align-items: center;
  gap: 3px;
  border-top: 1px solid #999;
  font-family: "Noto Sans CJK SC", sans-serif;
  font-size: 16px;
}

.ready {
  flex: 1;
}

.cell {
  height: 27px;
  padding-left: 2px;
  border: 1px solid #a8a8a8;
  border-right-color: #fff;
  border-bottom-color: #fff;
}

.mode-cell {
  width: 75px;
}

.time-cell {
  width: 98px;
}
```

FILE: plot.js
```javascript
// grid, ticks and axis labels of the scope
const grid = document.getElementById('grid');
const left = 35.5, right = 813.5, top_ = 13.5, bottom = 562.5;

function add(tag, cls, attrs, text) {
  const el = document.createElementNS('http://www.w3.org/2000/svg', tag);
  el.setAttribute('class', cls);
  for (const k in attrs) el.setAttribute(k, attrs[k]);
  if (text !== undefined) el.textContent = text;
  grid.appendChild(el);
}

function line(cls, x1, y1, x2, y2) {
  add('line', cls, { x1, y1, x2, y2 });
}

for (let i = 0; i <= 10; i++) {
  const x = Math.round(i * (right - left) / 10) + left;
  if (i > 0 && i < 10) {
    line('grid-line', x, top_, x, bottom);
    line('tick', x, top_, x, top_ + 7);
    line('tick', x, bottom, x, bottom - 7);
  }
  add('text', 'x-label', { x: x, y: 583 }, i * 500);
}

['0.8', '0.75', '0.7', '0.65', '0.6'].forEach((label, i) => {
  const y = 68.5 + i * 110;
  line('grid-line', left, y, right, y);
  line('tick', left, y, left + 7, y);
  line('tick', right, y, right - 7, y);
  add('text', 'y-label', { x: 32, y: y + 6 }, label);
});
```
